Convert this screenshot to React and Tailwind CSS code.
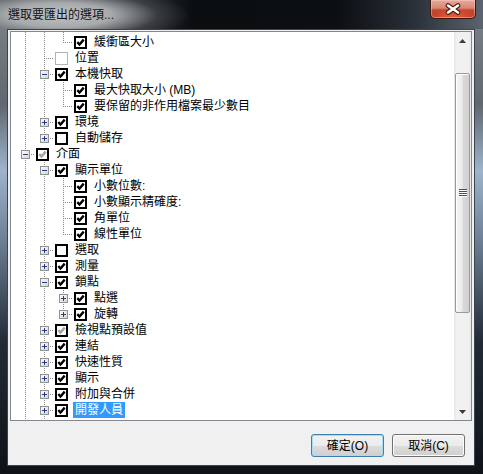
import React from "react"

const rows = [
  { l: 3, g: "||T", ghost: true },
  { l: 3, g: "||L", c: "on", t: "緩衝區大小" },
  { l: 2, g: "|T", c: "disabled", t: "位置" },
  { l: 2, g: "|T", e: "-", c: "on", t: "本機快取" },
  { l: 3, g: "||T", c: "on", t: "最大快取大小 (MB)" },
  { l: 3, g: "||L", c: "on", t: "要保留的非作用檔案最少數目" },
  { l: 2, g: "|T", e: "+", c: "on", t: "環境" },
  { l: 2, g: "|L", e: "+", c: "off", t: "自動儲存" },
  { l: 1, g: "T", e: "-", c: "grey", t: "介面" },
  { l: 2, g: "|T", e: "-", c: "on", t: "顯示單位" },
  { l: 3, g: "||T", c: "on", t: "小數位數:" },
  { l: 3, g: "||T", c: "on", t: "小數顯示精確度:" },
  { l: 3, g: "||T", c: "on", t: "角單位" },
  { l: 3, g: "||L", c: "on", t: "線性單位" },
  { l: 2, g: "|T", e: "+", c: "off", t: "選取" },
  { l: 2, g: "|T", e: "+", c: "on", t: "測量" },
  { l: 2, g: "|T", e: "-", c: "on", t: "鎖點" },
  { l: 3, g: "||T", e: "+", c: "on", t: "點選" },
  { l: 3, g: "||L", e: "+", c: "on", t: "旋轉" },
  { l: 2, g: "|T", e: "+", c: "grey", t: "檢視點預設值" },
  { l: 2, g: "|T", e: "+", c: "on", t: "連結" },
  { l: 2, g: "|T", e: "+", c: "on", t: "快速性質" },
  { l: 2, g: "|T", e: "+", c: "on", t: "顯示" },
  { l: 2, g: "|T", e: "+", c: "on", t: "附加與合併" },
  { l: 2, g: "|T", e: "+", c: "on", t: "開發人員", sel: true },
  { l: 2, g: "|T", ghost: true },
]

// one 19px indent cell of the tree, with its dotted guide line
function Guide({ kind, exp }) {
  const dot = { stroke: "#8a8a8a", strokeWidth: 1, strokeDasharray: "1 1" }
  return (
    <svg width="19" height="16" className="block shrink-0">
      {kind === "|" && <line x1="9.5" y1="0" x2="9.5" y2="16" {...dot} />}
      {(kind === "T" || kind === "L") && (
        <>
          <line x1="9.5" y1="0" x2="9.5" y2={kind === "T" ? 16 : 9} {...dot} />
          <line x1="11" y1="8.5" x2="19" y2="8.5" {...dot} />
        </>
      )}
      {exp && (
        <g>
          <defs>
            <linearGradient id="expg" x1="0" y1="0" x2="1" y2="1">
              <stop offset="0" stopColor="#ffffff" />
              <stop offset="1" stopColor="#d4d4d4" />
            </linearGradient>
          </defs>
          <rect x="5.5" y="4.5" width="8" height="8" fill="url(#expg)" stroke="#919191" />
          <line x1="7" y1="8.5" x2="12" y2="8.5" stroke="#24407f" />
          {exp === "+" && <line x1="9.5" y1="6" x2="9.5" y2="11" stroke="#24407f" />}
        </g>
      )}
    </svg>
  )
}

function Check({ state }) {
  if (state === "disabled") {
    return <span className="mt-[2px] ml-px block w-[13px] h-[13px] shrink-0 border border-[#b4b4b4] bg-white" />
  }
  return (
    <span className="mt-[2px] ml-px flex w-[13px] h-[13px] shrink-0 items-center justify-center border-2 border-black bg-white">
      {state !== "off" && (
        <svg width="9" height="9" className="block">
          <polyline
            points="1.3,4.2 3.5,6.5 7.7,1.6"
            fill="none"
            stroke={state === "grey" ? "#a3a3a3" : "#000"}
            strokeWidth="2.4"
          />
        </svg>
      )}
    </span>
  )
}

function Row({ r }) {
  const cells = r.g.split("")
  return (
    <div className="flex h-4 items-start pl-[5px]">
      {cells.map((k, i) => (
        <Guide key={i} kind={k} exp={i === cells.length - 1 ? r.e : null} />
      ))}
      {!r.ghost && (
        <>
          <Check state={r.c} />
          <span
            className={
              "ml-[5px] h-4 px-[2px] text-[12px] leading-4 whitespace-nowrap " +
              (r.sel ? "bg-[#3399ff] text-white" : "text-black")
            }
          >
            {r.t}
          </span>
        </>
      )}
    </div>
  )
}

function ScrollArrow({ up }) {
  return (
    <div className="flex h-[17px] items-center justify-center">
      <svg width="7" height="4" className="block">
        <polygon points={up ? "3.5,0 7,4 0,4" : "0,0 7,0 3.5,4"} fill="#3c3c3c" />
      </svg>
    </div>
  )
}

function Scrollbar() {
  return (
    <div className="flex w-[17px] shrink-0 flex-col bg-[linear-gradient(90deg,#e6e6e6_0%,#f1f1f1_15%,#f1f1f1_85%,#e8e8e8_100%)]">
      <ScrollArrow up />
      <div className="h-[24px]" />
      <div className="mx-px flex h-[240px] items-center justify-center rounded-[2px] border border-[#999999] bg-[linear-gradient(90deg,#f5f5f5_0%,#ececec_45%,#d9d9d9_55%,#d0d0d0_100%)] shadow-[inset_1px_1px_0_#ffffff]">
        <svg width="8" height="8" className="block">
          {[0, 2, 4, 6].map((y) => (
            <g key={y}>
              <line x1="0" y1={y + 0.5} x2="8" y2={y + 0.5} stroke="#4f4f4f" />
              <line x1="1" y1={y + 1.5} x2="8" y2={y + 1.5} stroke="#ffffff" />
            </g>
          ))}
        </svg>
      </div>
      <div className="flex-1" />
      <ScrollArrow />
    </div>
  )
}

function CloseButton() {
  return (
    <div className="mr-[7px] flex h-[19px] w-[46px] items-center justify-center rounded-b-[5px] border border-t-0 border-[#3b1710] bg-[radial-gradient(ellipse_26px_9px_at_50%_100%,#f0603c_0%,rgba(240,96,60,0)_100%),linear-gradient(180deg,#e6ab9f_0%,#d98674_45%,#c24a33_55%,#b8331d_100%)] shadow-[inset_0_0_0_1px_rgba(255,210,200,0.45)]">
      <svg width="16" height="12" className="block">
        <g stroke="#4a1a10" strokeWidth="4.6" strokeLinecap="round">
          <line x1="3" y1="2.5" x2="13" y2="9.5" />
          <line x1="13" y1="2.5" x2="3" y2="9.5" />
        </g>
        <g stroke="#ffffff" strokeWidth="2.6" strokeLinecap="round">
          <line x1="3" y1="2.5" x2="13" y2="9.5" />
          <line x1="13" y1="2.5" x2="3" y2="9.5" />
        </g>
      </svg>
    </div>
  )
}

export default function App() {
  return (
    <div className="flex h-[474px] w-[483px] flex-col bg-[linear-gradient(180deg,#80858a_0%,#60676f_22%,#9db4cc_36%,#6f8297_50%,#222b36_72%,#0e1318_100%)] font-['Liberation_Sans','Noto_Sans_CJK_TC',sans-serif]">
      {/* title bar */}
      <div className="flex h-[29px] shrink-0 items-start justify-between bg-[radial-gradient(ellipse_130px_30px_at_60px_15px,#c0c3c5_0%,#a7aaad_40%,rgba(80,84,88,0.5)_75%,rgba(70,74,78,0)_100%),linear-gradient(90deg,#6d7175_0%,#34383c_25%,#0b0e11_40%,#0c0f13_70%,#2a3139_86%,#5b646e_100%)]">
        <span className="mt-[7px] ml-[8px] text-[12px] leading-4 text-[#141414]">選取要匯出的選項...</span>
        <CloseButton />
      </div>

      {/* client area */}
      <div className="mr-[8px] mb-[8px] ml-[7px] flex flex-1 flex-col border border-[#3a444f] bg-[#f0f0f0]">
        <div className="mt-px mr-[2px] ml-[2px] flex h-[390px] border border-[#828790] bg-white">
          <div className="flex-1 overflow-hidden">
            <div className="-mt-[14px]">
              {rows.map((r, i) => (
                <Row key={i} r={r} />
              ))}
            </div>
          </div>
          <Scrollbar />
        </div>

        <div className="mt-[13px] mr-[9px] flex justify-end gap-[8px]">
          <button className="h-[23px] w-[73px] rounded-[3px] border border-[#3c7fb1] bg-[linear-gradient(180deg,#f2f2f2_0%,#ebebeb_50%,#dddddd_50%,#cfcfcf_100%)] text-[12px] text-black shadow-[inset_0_0_0_1px_#a6dcf5]">
            確定(O)
          </button>
          <button className="h-[23px] w-[73px] rounded-[3px] border border-[#707070] bg-[linear-gradient(180deg,#f2f2f2_0%,#ebebeb_50%,#dddddd_50%,#cfcfcf_100%)] text-[12px] text-black shadow-[inset_0_0_0_1px_#fcfcfc]">
            取消(C)
          </button>
        </div>
      </div>
    </div>
  )
}
